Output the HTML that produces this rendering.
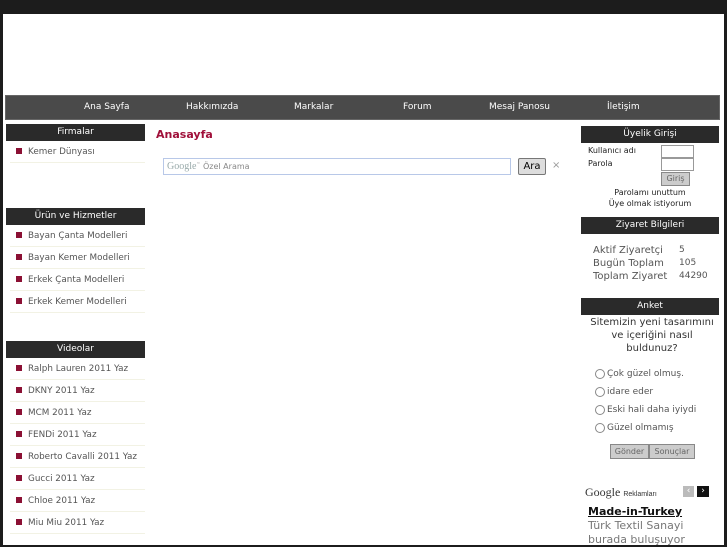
<!DOCTYPE html>
<html><head><meta charset="utf-8"><style>
*{margin:0;padding:0;box-sizing:border-box}
body{width:727px;height:545px;overflow:hidden;background:#1c1c1c;font-family:"DejaVu Sans","Liberation Sans",sans-serif;position:relative}
.page{position:absolute;left:3px;top:14px;width:721px;height:531px;background:#fff}
.abs{position:absolute}
.nav{left:5px;top:95px;width:715px;height:25px;background:#4a4a4a;border:1px solid #666;color:#fff;font-size:9px}
.nav span{position:absolute;top:6px}
.hd{background:#2a2a2a;color:#fff;font-size:9px;text-align:center;line-height:17px;height:17px}
.item{font-size:8.8px;color:#555;height:22px;line-height:23px;padding-left:18px;position:relative;border-bottom:1px solid #f2f2e4;width:135px;margin-left:4px;white-space:nowrap}
.item:before{content:"";position:absolute;left:6px;top:7px;width:6px;height:6px;background:#8b1034}
.r{font-size:8px;color:#222}
.inp{border:1px solid #999;background:#fff}
.btn{background:#ccc;border:1px solid #888;font-size:8px;color:#666;text-align:center}
.rad{width:10px;height:10px;border:1px solid #888;border-radius:50%;display:inline-block;vertical-align:middle;margin-right:2px}
</style></head><body>
<div class="page"></div>
<div class="abs nav">
<span style="left:78px">Ana Sayfa</span>
<span style="left:180px">Hakkımızda</span>
<span style="left:288px">Markalar</span>
<span style="left:397px">Forum</span>
<span style="left:483px">Mesaj Panosu</span>
<span style="left:601px">İletişim</span>
</div>

<div class="abs" style="left:6px;top:124px;width:139px">
<div class="hd">Firmalar</div>
<div class="item">Kemer Dünyası</div>
</div>
<div class="abs" style="left:6px;top:208px;width:139px">
<div class="hd">Ürün ve Hizmetler</div>
<div class="item">Bayan Çanta Modelleri</div>
<div class="item">Bayan Kemer Modelleri</div>
<div class="item">Erkek Çanta Modelleri</div>
<div class="item">Erkek Kemer Modelleri</div>
</div>
<div class="abs" style="left:6px;top:341px;width:139px">
<div class="hd">Videolar</div>
<div class="item">Ralph Lauren 2011 Yaz</div>
<div class="item">DKNY 2011 Yaz</div>
<div class="item">MCM 2011 Yaz</div>
<div class="item">FENDi 2011 Yaz</div>
<div class="item">Roberto Cavalli 2011 Yaz</div>
<div class="item">Gucci 2011 Yaz</div>
<div class="item">Chloe 2011 Yaz</div>
<div class="item">Miu Miu 2011 Yaz</div>
</div>

<div class="abs" style="left:156px;top:128px;font-size:11px;font-weight:bold;color:#a0103a">Anasayfa</div>
<div class="abs" style="left:163px;top:158px;width:348px;height:17px;border:1px solid #b8c8e8;font-size:8px;color:#888;padding:2px 3px"><span style="font-family:'Liberation Serif',serif;font-size:10px;color:#9aa">Google</span><sup style="font-size:4px">™</sup> Özel Arama</div>
<div class="abs" style="left:518px;top:158px;width:28px;height:17px;background:#ddd;border:1px solid #777;border-radius:2px;font-size:10px;text-align:center;line-height:15px">Ara</div>
<div class="abs" style="left:552px;top:160px;font-size:10px;color:#999">×</div>

<div class="abs" style="left:581px;top:126px;width:138px">
<div class="hd">Üyelik Girişi</div>
</div>
<div class="abs r" style="left:588px;top:146px">Kullanıcı adı</div>
<div class="abs r" style="left:588px;top:159px">Parola</div>
<div class="abs inp" style="left:661px;top:145px;width:33px;height:13px"></div>
<div class="abs inp" style="left:661px;top:158px;width:33px;height:13px"></div>
<div class="abs btn" style="left:661px;top:172px;width:29px;height:14px;line-height:12px">Giriş</div>
<div class="abs r" style="left:581px;top:187px;width:138px;text-align:center;line-height:11px">Parolamı unuttum<br>Üye olmak istiyorum</div>

<div class="abs" style="left:581px;top:217px;width:138px"><div class="hd">Ziyaret Bilgileri</div></div>
<div class="abs" style="left:593px;top:244px;font-size:10px;color:#555;line-height:13px">Aktif Ziyaretçi<br>Bugün Toplam<br>Toplam Ziyaret</div>
<div class="abs" style="left:679px;top:244px;font-size:9px;color:#555;line-height:13px">5<br>105<br>44290</div>

<div class="abs" style="left:581px;top:298px;width:138px"><div class="hd">Anket</div></div>
<div class="abs" style="left:581px;top:316px;width:142px;text-align:center;font-size:10px;color:#333;line-height:13px">Sitemizin yeni tasarımını<br>ve içeriğini nasıl<br>buldunuz?</div>
<div class="abs" style="left:595px;top:365px;font-size:9px;color:#555;line-height:18px">
<div><span class="rad"></span>Çok güzel olmuş.</div>
<div><span class="rad"></span>idare eder</div>
<div><span class="rad"></span>Eski hali daha iyiydi</div>
<div><span class="rad"></span>Güzel olmamış</div>
</div>
<div class="abs btn" style="left:610px;top:444px;width:39px;height:15px;line-height:13px">Gönder</div>
<div class="abs btn" style="left:649px;top:444px;width:46px;height:15px;line-height:13px">Sonuçlar</div>
<div class="abs" style="left:585px;top:485px;font-family:'Liberation Serif',serif;font-size:12px;color:#333">Google <span style="font-family:'Liberation Sans',sans-serif;font-size:7px">Reklamları</span></div>
<div class="abs" style="left:683px;top:486px;width:11px;height:11px;background:#bbb;color:#fff;font-size:9px;line-height:11px;text-align:center">‹</div>
<div class="abs" style="left:697px;top:486px;width:12px;height:11px;background:#111;color:#fff;font-size:9px;line-height:11px;text-align:center">›</div>
<div class="abs" style="left:588px;top:505px;font-size:11px;font-weight:bold;color:#111;text-decoration:underline">Made-in-Turkey</div>
<div class="abs" style="left:588px;top:519px;font-size:11px;color:#777;line-height:14px">Türk Textil Sanayi<br>burada buluşuyor</div>
</body></html>
